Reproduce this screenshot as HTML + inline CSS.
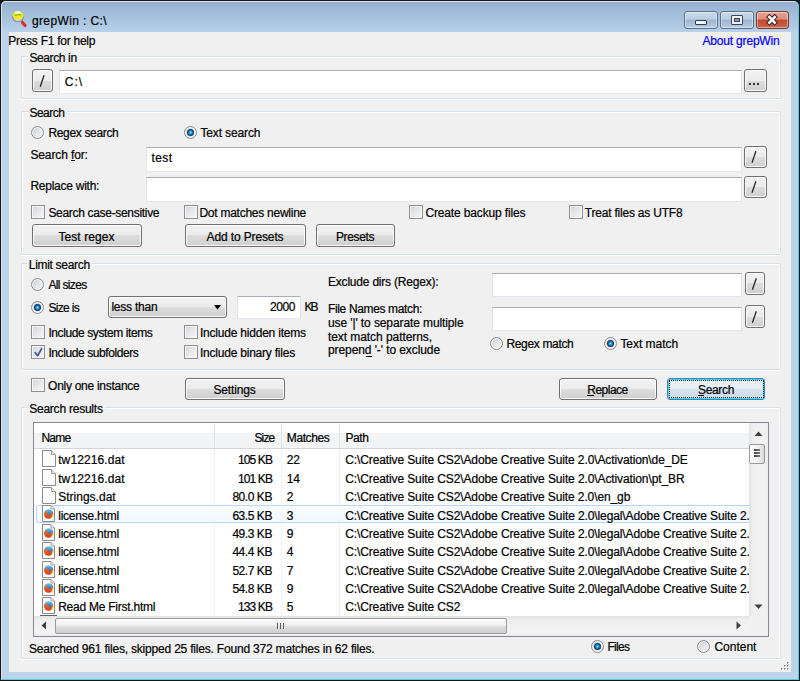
<!DOCTYPE html>
<html><head><meta charset="utf-8"><style>
html,body{margin:0;padding:0;width:800px;height:681px;overflow:hidden;background:#161616;}
#root{position:absolute;left:0;top:0;width:800px;height:681px;overflow:hidden;}
.t{position:absolute;font-family:"Liberation Sans",sans-serif;line-height:12px;white-space:pre;color:#000;-webkit-text-stroke:0.2px currentColor;}

</style></head><body>
<div id="root">
<div style="position:absolute;left:0;top:0;width:800px;height:681px;background:#161616;"></div>
<div style="position:absolute;left:1px;top:1px;width:798px;height:679px;border-radius:5px 5px 0 0;background:#4ccfe6;"></div>
<div style="position:absolute;left:1px;top:1px;width:797px;height:678px;border-radius:5px 5px 0 0;background:#dbe4ed;"></div>
<div style="position:absolute;left:2px;top:2px;width:796px;height:677px;border-radius:4px 4px 0 0;background:#bdd3eb;"></div>
<div style="position:absolute;left:2px;top:2px;width:796px;height:30px;border-radius:4px 4px 0 0;background:linear-gradient(#93b1cf,#b9d1ea);"></div>
<div style="position:absolute;left:9px;top:32px;width:782px;height:640px;background:#f0f0f0;"></div>
<svg style="position:absolute;left:10px;top:9px" width="20" height="20" viewBox="0 0 20 20">
<line x1="12.5" y1="13.5" x2="15" y2="16.5" stroke="#e02a30" stroke-width="3.2" stroke-linecap="round"/>
<ellipse cx="8" cy="8.5" rx="5.5" ry="4.6" fill="#70757c"/>
<ellipse cx="8" cy="8.8" rx="4.6" ry="3.6" fill="#d4d6da"/>
<ellipse cx="8" cy="6.4" rx="5.4" ry="4.0" fill="#f0e818"/>
<ellipse cx="8" cy="3.4" rx="3.2" ry="1.1" fill="#ffffff" opacity="0.85"/>
<path d="M4.6 6.4 Q8 5.2 11.4 6" stroke="#3aa050" stroke-width="1" fill="none" opacity="0.75"/>
</svg>
<div class="t" style="left:31.90px;top:15px;font-size:12px;letter-spacing:0.382px;color:#000;">grepWin : C:\</div>
<div style="position:absolute;left:684px;top:11px;width:34px;height:18px;box-sizing:border-box;border:1px solid #5c6f86;border-radius:3px;background:linear-gradient(#c9daea 0%,#b9cde2 45%,#9cb6d1 50%,#b7cde3 100%);box-shadow:inset 0 0 0 1px rgba(255,255,255,0.45);"></div>
<div style="position:absolute;left:720px;top:11px;width:34px;height:18px;box-sizing:border-box;border:1px solid #5c6f86;border-radius:3px;background:linear-gradient(#c9daea 0%,#b9cde2 45%,#9cb6d1 50%,#b7cde3 100%);box-shadow:inset 0 0 0 1px rgba(255,255,255,0.45);"></div>
<div style="position:absolute;left:756px;top:11px;width:33px;height:18px;box-sizing:border-box;border:1px solid #6e3b33;border-radius:3px;background:linear-gradient(#e8a493 0%,#dc8b78 45%,#c0452d 50%,#d0674b 100%);box-shadow:inset 0 0 0 1px rgba(255,255,255,0.45);"></div>
<div style="position:absolute;left:695px;top:20px;width:12px;height:5px;box-sizing:border-box;background:#f4f6f8;border:1px solid #2e3b4a;border-radius:1px;"></div>
<div style="position:absolute;left:731px;top:15px;width:12px;height:10px;box-sizing:border-box;border:1px solid #3a4656;border-radius:1px;background:#eef0f3;"></div>
<div style="position:absolute;left:734px;top:18px;width:6px;height:4px;box-sizing:border-box;border:1px solid #3a4656;background:#7f9bb8;"></div>
<svg style="position:absolute;left:765px;top:13px" width="14" height="13" viewBox="0 0 14 13">
<path d="M4.3 4 L9.7 9.6 M9.7 4 L4.3 9.6" stroke="#3a2420" stroke-width="4.6" stroke-linecap="square"/>
<path d="M4.3 4 L9.7 9.6 M9.7 4 L4.3 9.6" stroke="#f4f4f4" stroke-width="2.6" stroke-linecap="square"/>
</svg>
<div class="t" style="left:8.20px;top:35px;font-size:12px;letter-spacing:-0.257px;color:#000;">Press F1 for help</div>
<div class="t" style="left:702.50px;top:35px;font-size:12px;letter-spacing:-0.184px;color:#0000ff;">About grepWin</div>
<div style="position:absolute;left:21px;top:56px;width:760px;height:43px;box-sizing:border-box;border:1px solid #d5dfe5;border-radius:2px;box-shadow:inset 1px 1px 0 #fff, inset -1px 0 0 #fff, 0 1px 0 #fff;"></div>
<div style="position:absolute;left:28px;top:52px;width:51.3px;height:12px;background:#f0f0f0;"></div>
<div class="t" style="left:29.40px;top:52px;font-size:12px;letter-spacing:-0.378px;color:#000;">Search in</div>
<div style="position:absolute;left:32px;top:69px;width:21px;height:23px;box-sizing:border-box;border:1px solid #707070;border-radius:3px;background:linear-gradient(#f2f2f2 0%,#ebebeb 50%,#dddddd 50%,#cfcfcf 100%);box-shadow:inset 0 0 0 1px #fbfbfb;"></div>
<svg style="position:absolute;left:0;top:0" width="800" height="681"><line x1="40.2" y1="86.7" x2="44.1" y2="75.3" stroke="#202020" stroke-width="1.25"/></svg>
<div style="position:absolute;left:59px;top:70px;width:683px;height:24px;box-sizing:border-box;background:#fff;border:1px solid #e2e3ea;border-top-color:#abadb3;border-bottom-color:#e3e9ef;"></div>
<div class="t" style="left:64.70px;top:76px;font-size:12px;letter-spacing:1.052px;color:#000;">C:\</div>
<div style="position:absolute;left:744px;top:69px;width:23px;height:23px;box-sizing:border-box;border:1px solid #707070;border-radius:3px;background:linear-gradient(#f2f2f2 0%,#ebebeb 50%,#dddddd 50%,#cfcfcf 100%);box-shadow:inset 0 0 0 1px #fbfbfb;"></div>
<div style="position:absolute;left:749px;top:83px;width:2px;height:2px;background:#303030;"></div>
<div style="position:absolute;left:753px;top:83px;width:2px;height:2px;background:#303030;"></div>
<div style="position:absolute;left:757px;top:83px;width:2px;height:2px;background:#303030;"></div>
<div style="position:absolute;left:21px;top:111px;width:760px;height:144px;box-sizing:border-box;border:1px solid #d5dfe5;border-radius:2px;box-shadow:inset 1px 1px 0 #fff, inset -1px 0 0 #fff, 0 1px 0 #fff;"></div>
<div style="position:absolute;left:28px;top:107px;width:39px;height:12px;background:#f0f0f0;"></div>
<div class="t" style="left:29.40px;top:107px;font-size:12px;letter-spacing:-0.505px;color:#000;">Search</div>
<div style="position:absolute;left:31px;top:126px;width:13px;height:13px;box-sizing:border-box;border-radius:50%;border:1px solid #8b8b8b;background:linear-gradient(135deg,#c6ccd4 0%,#e2e5e9 50%,#f6f6f6 100%);box-shadow:inset 0 0 0 1px #f8f8f8;"></div>
<div class="t" style="left:48.40px;top:127px;font-size:12px;letter-spacing:-0.337px;color:#000;">Regex search</div>
<div style="position:absolute;left:184px;top:126px;width:13px;height:13px;box-sizing:border-box;border-radius:50%;border:1px solid #8b8b8b;background:linear-gradient(135deg,#c6ccd4 0%,#e2e5e9 50%,#f6f6f6 100%);box-shadow:inset 0 0 0 1px #f8f8f8;"></div>
<div style="position:absolute;left:187px;top:129px;width:7px;height:7px;border-radius:50%;background:radial-gradient(circle closest-side at 50% 50%,#8ae4ff 0%,#35b0e8 30%,#1570b0 60%,#0b355f 85%,#1a3350 100%);"></div>
<div class="t" style="left:200.40px;top:127px;font-size:12px;letter-spacing:-0.124px;color:#000;">Text search</div>
<div class="t" style="left:30.40px;top:149px;font-size:12px;letter-spacing:-0.118px;color:#000;">Search for:</div>
<div class="t" style="left:30.40px;top:180px;font-size:12px;letter-spacing:-0.250px;color:#000;">Replace with:</div>
<div style="position:absolute;left:146px;top:147px;width:596px;height:25px;box-sizing:border-box;background:#fff;border:1px solid #e2e3ea;border-top-color:#abadb3;border-bottom-color:#e3e9ef;"></div>
<div class="t" style="left:151.40px;top:152px;font-size:12px;letter-spacing:0.414px;color:#000;">test</div>
<div style="position:absolute;left:744px;top:146px;width:23px;height:22px;box-sizing:border-box;border:1px solid #707070;border-radius:3px;background:linear-gradient(#f2f2f2 0%,#ebebeb 50%,#dddddd 50%,#cfcfcf 100%);box-shadow:inset 0 0 0 1px #fbfbfb;"></div>
<svg style="position:absolute;left:0;top:0" width="800" height="681"><line x1="752.0" y1="162.7" x2="755.9" y2="151.3" stroke="#202020" stroke-width="1.25"/></svg>
<div style="position:absolute;left:146px;top:177px;width:596px;height:25px;box-sizing:border-box;background:#fff;border:1px solid #e2e3ea;border-top-color:#abadb3;border-bottom-color:#e3e9ef;"></div>
<div style="position:absolute;left:744px;top:176px;width:23px;height:22px;box-sizing:border-box;border:1px solid #707070;border-radius:3px;background:linear-gradient(#f2f2f2 0%,#ebebeb 50%,#dddddd 50%,#cfcfcf 100%);box-shadow:inset 0 0 0 1px #fbfbfb;"></div>
<svg style="position:absolute;left:0;top:0" width="800" height="681"><line x1="752.0" y1="192.7" x2="755.9" y2="181.3" stroke="#202020" stroke-width="1.25"/></svg>
<div style="position:absolute;left:31px;top:205px;width:14px;height:14px;box-sizing:border-box;border:1px solid #8f8f8f;background:linear-gradient(135deg,#cfd3d8 0%,#e6e8eb 50%,#f7f7f7 100%);box-shadow:inset 0 0 0 1px #f6f6f6;"></div>
<div class="t" style="left:48.40px;top:207px;font-size:12px;letter-spacing:-0.314px;color:#000;">Search case-sensitive</div>
<div style="position:absolute;left:184px;top:205px;width:14px;height:14px;box-sizing:border-box;border:1px solid #8f8f8f;background:linear-gradient(135deg,#cfd3d8 0%,#e6e8eb 50%,#f7f7f7 100%);box-shadow:inset 0 0 0 1px #f6f6f6;"></div>
<div class="t" style="left:199.40px;top:207px;font-size:12px;letter-spacing:-0.252px;color:#000;">Dot matches newline</div>
<div style="position:absolute;left:409px;top:205px;width:14px;height:14px;box-sizing:border-box;border:1px solid #8f8f8f;background:linear-gradient(135deg,#cfd3d8 0%,#e6e8eb 50%,#f7f7f7 100%);box-shadow:inset 0 0 0 1px #f6f6f6;"></div>
<div class="t" style="left:425.40px;top:207px;font-size:12px;letter-spacing:-0.144px;color:#000;">Create backup files</div>
<div style="position:absolute;left:569px;top:205px;width:14px;height:14px;box-sizing:border-box;border:1px solid #8f8f8f;background:linear-gradient(135deg,#cfd3d8 0%,#e6e8eb 50%,#f7f7f7 100%);box-shadow:inset 0 0 0 1px #f6f6f6;"></div>
<div class="t" style="left:584.80px;top:207px;font-size:12px;letter-spacing:-0.209px;color:#000;">Treat files as UTF8</div>
<div style="position:absolute;left:32px;top:224px;width:110px;height:23px;box-sizing:border-box;border:1px solid #707070;border-radius:3px;background:linear-gradient(#f2f2f2 0%,#ebebeb 50%,#dddddd 50%,#cfcfcf 100%);box-shadow:inset 0 0 0 1px #fbfbfb;"></div>
<div class="t" style="left:58.50px;top:231px;font-size:12px;letter-spacing:0.064px;color:#000;">Test regex</div>
<div style="position:absolute;left:185px;top:224px;width:121px;height:23px;box-sizing:border-box;border:1px solid #707070;border-radius:3px;background:linear-gradient(#f2f2f2 0%,#ebebeb 50%,#dddddd 50%,#cfcfcf 100%);box-shadow:inset 0 0 0 1px #fbfbfb;"></div>
<div class="t" style="left:206.50px;top:231px;font-size:12px;letter-spacing:-0.123px;color:#000;">Add to Presets</div>
<div style="position:absolute;left:316px;top:224px;width:79px;height:23px;box-sizing:border-box;border:1px solid #707070;border-radius:3px;background:linear-gradient(#f2f2f2 0%,#ebebeb 50%,#dddddd 50%,#cfcfcf 100%);box-shadow:inset 0 0 0 1px #fbfbfb;"></div>
<div class="t" style="left:336.00px;top:231px;font-size:12px;letter-spacing:-0.384px;color:#000;">Presets</div>
<div style="position:absolute;left:21px;top:263px;width:760px;height:107px;box-sizing:border-box;border:1px solid #d5dfe5;border-radius:2px;box-shadow:inset 1px 1px 0 #fff, inset -1px 0 0 #fff, 0 1px 0 #fff;"></div>
<div style="position:absolute;left:27.4px;top:259px;width:65px;height:12px;background:#f0f0f0;"></div>
<div class="t" style="left:28.80px;top:259px;font-size:12px;letter-spacing:-0.307px;color:#000;">Limit search</div>
<div style="position:absolute;left:31px;top:278px;width:13px;height:13px;box-sizing:border-box;border-radius:50%;border:1px solid #8b8b8b;background:linear-gradient(135deg,#c6ccd4 0%,#e2e5e9 50%,#f6f6f6 100%);box-shadow:inset 0 0 0 1px #f8f8f8;"></div>
<div class="t" style="left:48.40px;top:279px;font-size:12px;letter-spacing:-0.646px;color:#000;">All sizes</div>
<div style="position:absolute;left:31px;top:301px;width:13px;height:13px;box-sizing:border-box;border-radius:50%;border:1px solid #8b8b8b;background:linear-gradient(135deg,#c6ccd4 0%,#e2e5e9 50%,#f6f6f6 100%);box-shadow:inset 0 0 0 1px #f8f8f8;"></div>
<div style="position:absolute;left:34px;top:304px;width:7px;height:7px;border-radius:50%;background:radial-gradient(circle closest-side at 50% 50%,#8ae4ff 0%,#35b0e8 30%,#1570b0 60%,#0b355f 85%,#1a3350 100%);"></div>
<div class="t" style="left:48.40px;top:302px;font-size:12px;letter-spacing:-0.678px;color:#000;">Size is</div>
<div style="position:absolute;left:108px;top:296px;width:119px;height:22px;box-sizing:border-box;border:1px solid #707070;border-radius:3px;background:linear-gradient(#f2f2f2 0%,#ebebeb 50%,#dddddd 50%,#cfcfcf 100%);box-shadow:inset 0 0 0 1px #fbfbfb;"></div>
<div class="t" style="left:111.40px;top:301px;font-size:12px;letter-spacing:-0.226px;color:#000;">less than</div>
<svg style="position:absolute;left:214px;top:305px" width="8" height="6" viewBox="0 0 8 6"><path d="M0 0 H7 L3.5 4.6 Z" fill="#000"/></svg>
<div style="position:absolute;left:237px;top:296px;width:64px;height:23px;box-sizing:border-box;background:#fff;border:1px solid #e2e3ea;border-top-color:#abadb3;border-bottom-color:#e3e9ef;"></div>
<div class="t" style="left:270.00px;top:301px;font-size:12px;letter-spacing:-0.426px;color:#000;">2000</div>
<div class="t" style="left:304.40px;top:301px;font-size:12px;letter-spacing:-1.858px;color:#000;">KB</div>
<div style="position:absolute;left:31px;top:325px;width:14px;height:14px;box-sizing:border-box;border:1px solid #8f8f8f;background:linear-gradient(135deg,#cfd3d8 0%,#e6e8eb 50%,#f7f7f7 100%);box-shadow:inset 0 0 0 1px #f6f6f6;"></div>
<div class="t" style="left:48.40px;top:327px;font-size:12px;letter-spacing:-0.402px;color:#000;">Include system items</div>
<div style="position:absolute;left:184px;top:325px;width:14px;height:14px;box-sizing:border-box;border:1px solid #8f8f8f;background:linear-gradient(135deg,#cfd3d8 0%,#e6e8eb 50%,#f7f7f7 100%);box-shadow:inset 0 0 0 1px #f6f6f6;"></div>
<div class="t" style="left:200.00px;top:327px;font-size:12px;letter-spacing:-0.214px;color:#000;">Include hidden items</div>
<div style="position:absolute;left:31px;top:345px;width:14px;height:14px;box-sizing:border-box;border:1px solid #8f8f8f;background:linear-gradient(135deg,#cfd3d8 0%,#e6e8eb 50%,#f7f7f7 100%);box-shadow:inset 0 0 0 1px #f6f6f6;"></div>
<svg style="position:absolute;left:31px;top:345px" width="14" height="14" viewBox="0 0 14 14"><path d="M4.2 7.6 L6.6 10.8 L10.6 3.8" fill="none" stroke="#4a5f9c" stroke-width="1.8" stroke-linejoin="round" stroke-linecap="round"/></svg>
<div class="t" style="left:48.40px;top:347px;font-size:12px;letter-spacing:-0.411px;color:#000;">Include subfolders</div>
<div style="position:absolute;left:184px;top:345px;width:14px;height:14px;box-sizing:border-box;border:1px solid #8f8f8f;background:linear-gradient(135deg,#cfd3d8 0%,#e6e8eb 50%,#f7f7f7 100%);box-shadow:inset 0 0 0 1px #f6f6f6;"></div>
<div class="t" style="left:200.00px;top:347px;font-size:12px;letter-spacing:-0.220px;color:#000;">Include binary files</div>
<div class="t" style="left:328.00px;top:276px;font-size:12px;letter-spacing:-0.206px;color:#000;">Exclude dirs (Regex):</div>
<div class="t" style="left:328.00px;top:303px;font-size:12px;letter-spacing:-0.355px;color:#000;">File Names match:</div>
<div class="t" style="left:328.00px;top:316.5px;font-size:12px;letter-spacing:-0.105px;color:#000;">use &#x27;|&#x27; to separate multiple</div>
<div class="t" style="left:328.00px;top:331px;font-size:12px;letter-spacing:-0.070px;color:#000;">text match patterns,</div>
<div class="t" style="left:328.00px;top:344px;font-size:12px;letter-spacing:-0.091px;color:#000;">prepend &#x27;-&#x27; to exclude</div>
<div style="position:absolute;left:492px;top:273px;width:250px;height:24px;box-sizing:border-box;background:#fff;border:1px solid #e2e3ea;border-top-color:#abadb3;border-bottom-color:#e3e9ef;"></div>
<div style="position:absolute;left:745px;top:272px;width:20px;height:23px;box-sizing:border-box;border:1px solid #707070;border-radius:3px;background:linear-gradient(#f2f2f2 0%,#ebebeb 50%,#dddddd 50%,#cfcfcf 100%);box-shadow:inset 0 0 0 1px #fbfbfb;"></div>
<svg style="position:absolute;left:0;top:0" width="800" height="681"><line x1="752.4" y1="289.7" x2="756.3" y2="278.3" stroke="#202020" stroke-width="1.25"/></svg>
<div style="position:absolute;left:492px;top:307px;width:250px;height:24px;box-sizing:border-box;background:#fff;border:1px solid #e2e3ea;border-top-color:#abadb3;border-bottom-color:#e3e9ef;"></div>
<div style="position:absolute;left:745px;top:305px;width:20px;height:23px;box-sizing:border-box;border:1px solid #707070;border-radius:3px;background:linear-gradient(#f2f2f2 0%,#ebebeb 50%,#dddddd 50%,#cfcfcf 100%);box-shadow:inset 0 0 0 1px #fbfbfb;"></div>
<svg style="position:absolute;left:0;top:0" width="800" height="681"><line x1="752.4" y1="322.7" x2="756.3" y2="311.3" stroke="#202020" stroke-width="1.25"/></svg>
<div style="position:absolute;left:490px;top:337px;width:13px;height:13px;box-sizing:border-box;border-radius:50%;border:1px solid #8b8b8b;background:linear-gradient(135deg,#c6ccd4 0%,#e2e5e9 50%,#f6f6f6 100%);box-shadow:inset 0 0 0 1px #f8f8f8;"></div>
<div class="t" style="left:506.40px;top:338px;font-size:12px;letter-spacing:-0.337px;color:#000;">Regex match</div>
<div style="position:absolute;left:604px;top:337px;width:13px;height:13px;box-sizing:border-box;border-radius:50%;border:1px solid #8b8b8b;background:linear-gradient(135deg,#c6ccd4 0%,#e2e5e9 50%,#f6f6f6 100%);box-shadow:inset 0 0 0 1px #f8f8f8;"></div>
<div style="position:absolute;left:607px;top:340px;width:7px;height:7px;border-radius:50%;background:radial-gradient(circle closest-side at 50% 50%,#8ae4ff 0%,#35b0e8 30%,#1570b0 60%,#0b355f 85%,#1a3350 100%);"></div>
<div class="t" style="left:620.40px;top:338px;font-size:12px;letter-spacing:-0.028px;color:#000;">Text match</div>
<div style="position:absolute;left:31px;top:378px;width:14px;height:14px;box-sizing:border-box;border:1px solid #8f8f8f;background:linear-gradient(135deg,#cfd3d8 0%,#e6e8eb 50%,#f7f7f7 100%);box-shadow:inset 0 0 0 1px #f6f6f6;"></div>
<div class="t" style="left:48.10px;top:380px;font-size:12px;letter-spacing:-0.280px;color:#000;">Only one instance</div>
<div style="position:absolute;left:185px;top:378px;width:100px;height:22px;box-sizing:border-box;border:1px solid #707070;border-radius:3px;background:linear-gradient(#f2f2f2 0%,#ebebeb 50%,#dddddd 50%,#cfcfcf 100%);box-shadow:inset 0 0 0 1px #fbfbfb;"></div>
<div class="t" style="left:213.50px;top:384px;font-size:12px;letter-spacing:-0.170px;color:#000;">Settings</div>
<div style="position:absolute;left:559px;top:378px;width:98px;height:22px;box-sizing:border-box;border:1px solid #707070;border-radius:3px;background:linear-gradient(#f2f2f2 0%,#ebebeb 50%,#dddddd 50%,#cfcfcf 100%);box-shadow:inset 0 0 0 1px #fbfbfb;"></div>
<div class="t" style="left:587.30px;top:384px;font-size:12px;letter-spacing:-0.519px;color:#000;">Replace</div>
<div style="position:absolute;left:667px;top:378px;width:98px;height:22px;box-sizing:border-box;border:1px solid #3c7fb1;border-radius:3px;background:linear-gradient(#eef4f8 0%,#e6eef4 50%,#d6e2eb 50%,#cddbe6 100%);box-shadow:inset 0 0 0 1px #48d8fb, inset 0 0 0 2px #bfe9f9;"></div>
<div style="position:absolute;left:669px;top:380px;width:95px;height:18px;box-sizing:border-box;border:1px dotted #202020;"></div>
<div class="t" style="left:698.00px;top:384px;font-size:12px;letter-spacing:-0.339px;color:#000;">Search</div>
<div style="position:absolute;left:21px;top:407px;width:760px;height:252px;box-sizing:border-box;border:1px solid #d5dfe5;border-radius:2px;box-shadow:inset 1px 1px 0 #fff, inset -1px 0 0 #fff, 0 1px 0 #fff;"></div>
<div style="position:absolute;left:27.8px;top:403px;width:77.5px;height:12px;background:#f0f0f0;"></div>
<div class="t" style="left:29.20px;top:403px;font-size:12px;letter-spacing:-0.229px;color:#000;">Search results</div>
<div style="position:absolute;left:33px;top:422px;width:736px;height:215px;box-sizing:border-box;border:1px solid #828790;background:#fff;"></div>
<div style="position:absolute;left:34px;top:423px;width:715px;height:26px;box-sizing:border-box;background:linear-gradient(#ffffff 0%,#ffffff 42%,#f3f4f6 42%,#f3f4f6 100%);border-bottom:1px solid #d5d5d5;"></div>
<div style="position:absolute;left:214px;top:424px;width:1px;height:24px;background:#dfe1e4;"></div>
<div style="position:absolute;left:214px;top:449px;width:1px;height:167px;background:#eef3fb;"></div>
<div style="position:absolute;left:281px;top:424px;width:1px;height:24px;background:#dfe1e4;"></div>
<div style="position:absolute;left:281px;top:449px;width:1px;height:167px;background:#eef3fb;"></div>
<div style="position:absolute;left:339px;top:424px;width:1px;height:24px;background:#dfe1e4;"></div>
<div style="position:absolute;left:339px;top:449px;width:1px;height:167px;background:#eef3fb;"></div>
<div class="t" style="left:41.40px;top:432px;font-size:12px;letter-spacing:-0.754px;color:#000;">Name</div>
<div class="t" style="left:254.40px;top:432px;font-size:12px;letter-spacing:-0.836px;color:#000;">Size</div>
<div class="t" style="left:286.80px;top:432px;font-size:12px;letter-spacing:-0.394px;color:#000;">Matches</div>
<div class="t" style="left:345.40px;top:432px;font-size:12px;letter-spacing:-0.422px;color:#000;">Path</div>
<div style="position:absolute;left:36px;top:505.0px;width:728px;height:18px;box-sizing:border-box;border:1px solid #b8d6fb;border-radius:2px;background:linear-gradient(#fafcff,#f2f8ff);"></div>
<div style="position:absolute;left:34px;top:448px;width:715px;height:168px;overflow:hidden">
</div>
<svg style="position:absolute;left:41px;top:450px" width="16" height="17" viewBox="0 0 16 17">
<path d="M1.5 0.5 H10.5 L14.5 4.5 V16.5 H1.5 Z" fill="#fbfbfb" stroke="#8a8a8a"/>
<path d="M10.5 0.5 V4.5 H14.5" fill="#e8e8e8" stroke="#a0a0a0"/></svg>
<div class="t" style="left:58.20px;top:454px;font-size:12px;letter-spacing:0.101px;color:#000;">tw12216.dat</div>
<div class="t" style="left:238.00px;top:454px;font-size:12px;letter-spacing:-0.896px;color:#000;">105 KB</div>
<div class="t" style="left:286.80px;top:454px;font-size:12px;letter-spacing:-0.334px;color:#000;">22</div>
<div class="t" style="left:345.20px;top:454px;font-size:12px;letter-spacing:-0.111px;color:#000;">C:\Creative Suite CS2\Adobe Creative Suite 2.0\Activation\de_DE</div>
<svg style="position:absolute;left:41px;top:469px" width="16" height="17" viewBox="0 0 16 17">
<path d="M1.5 0.5 H10.5 L14.5 4.5 V16.5 H1.5 Z" fill="#fbfbfb" stroke="#8a8a8a"/>
<path d="M10.5 0.5 V4.5 H14.5" fill="#e8e8e8" stroke="#a0a0a0"/></svg>
<div class="t" style="left:58.20px;top:473px;font-size:12px;letter-spacing:0.101px;color:#000;">tw12216.dat</div>
<div class="t" style="left:238.00px;top:473px;font-size:12px;letter-spacing:-0.896px;color:#000;">101 KB</div>
<div class="t" style="left:286.80px;top:473px;font-size:12px;letter-spacing:-0.334px;color:#000;">14</div>
<div class="t" style="left:345.20px;top:473px;font-size:12px;letter-spacing:-0.110px;color:#000;">C:\Creative Suite CS2\Adobe Creative Suite 2.0\Activation\pt_BR</div>
<svg style="position:absolute;left:41px;top:487px" width="16" height="17" viewBox="0 0 16 17">
<path d="M1.5 0.5 H10.5 L14.5 4.5 V16.5 H1.5 Z" fill="#fbfbfb" stroke="#8a8a8a"/>
<path d="M10.5 0.5 V4.5 H14.5" fill="#e8e8e8" stroke="#a0a0a0"/></svg>
<div class="t" style="left:58.20px;top:491px;font-size:12px;letter-spacing:0.011px;color:#000;">Strings.dat</div>
<div class="t" style="left:232.40px;top:491px;font-size:12px;letter-spacing:-0.443px;color:#000;">80.0 KB</div>
<div class="t" style="left:286.80px;top:491px;font-size:12px;letter-spacing:-0.334px;color:#000;">2</div>
<div class="t" style="left:345.20px;top:491px;font-size:12px;letter-spacing:-0.112px;color:#000;">C:\Creative Suite CS2\Adobe Creative Suite 2.0\en_gb</div>
<svg style="position:absolute;left:41px;top:505px" width="16" height="17" viewBox="0 0 16 17">
<defs><linearGradient id="og3" x1="0" y1="0" x2="0" y2="1"><stop offset="0" stop-color="#f7861e"/><stop offset="1" stop-color="#d63b1e"/></linearGradient>
<linearGradient id="bg3" x1="0" y1="0" x2="0" y2="1"><stop offset="0" stop-color="#62c8f2"/><stop offset="1" stop-color="#1d62b8"/></linearGradient></defs>
<path d="M1.5 0.5 H10 L13.5 4 V16.5 H1.5 Z" fill="#fbfbfb" stroke="#8a8a8a"/>
<path d="M10 0.5 V4 H13.5" fill="#e8e8e8" stroke="#a8a8a8"/>
<circle cx="7.6" cy="9.1" r="4.7" fill="url(#og3)"/>
<path d="M3.8 6.6 Q5.4 4.3 8 4.4 Q11.2 4.7 12.2 7.8 Q11.2 7.2 10.4 8 L9.3 10.8 Q8.4 9.6 7.1 9 Q5.6 7.4 3.8 6.6 Z" fill="url(#bg3)"/>
<path d="M11.9 8.4 Q12.7 10.8 11.2 12.6 Q10.3 13.4 9.1 13.7 Q10.9 11.8 11.9 8.4 Z" fill="#f6cc3c"/>
</svg>
<div class="t" style="left:58.20px;top:510px;font-size:12px;letter-spacing:-0.222px;color:#000;">license.html</div>
<div class="t" style="left:232.40px;top:510px;font-size:12px;letter-spacing:-0.443px;color:#000;">63.5 KB</div>
<div class="t" style="left:286.80px;top:510px;font-size:12px;letter-spacing:-0.334px;color:#000;">3</div>
<div class="t" style="left:345.20px;top:510px;font-size:12px;letter-spacing:-0.109px;color:#000;">C:\Creative Suite CS2\Adobe Creative Suite 2.0\legal\Adobe Creative Suite 2.0</div>
<svg style="position:absolute;left:41px;top:524px" width="16" height="17" viewBox="0 0 16 17">
<defs><linearGradient id="og4" x1="0" y1="0" x2="0" y2="1"><stop offset="0" stop-color="#f7861e"/><stop offset="1" stop-color="#d63b1e"/></linearGradient>
<linearGradient id="bg4" x1="0" y1="0" x2="0" y2="1"><stop offset="0" stop-color="#62c8f2"/><stop offset="1" stop-color="#1d62b8"/></linearGradient></defs>
<path d="M1.5 0.5 H10 L13.5 4 V16.5 H1.5 Z" fill="#fbfbfb" stroke="#8a8a8a"/>
<path d="M10 0.5 V4 H13.5" fill="#e8e8e8" stroke="#a8a8a8"/>
<circle cx="7.6" cy="9.1" r="4.7" fill="url(#og4)"/>
<path d="M3.8 6.6 Q5.4 4.3 8 4.4 Q11.2 4.7 12.2 7.8 Q11.2 7.2 10.4 8 L9.3 10.8 Q8.4 9.6 7.1 9 Q5.6 7.4 3.8 6.6 Z" fill="url(#bg4)"/>
<path d="M11.9 8.4 Q12.7 10.8 11.2 12.6 Q10.3 13.4 9.1 13.7 Q10.9 11.8 11.9 8.4 Z" fill="#f6cc3c"/>
</svg>
<div class="t" style="left:58.20px;top:528px;font-size:12px;letter-spacing:-0.222px;color:#000;">license.html</div>
<div class="t" style="left:232.40px;top:528px;font-size:12px;letter-spacing:-0.443px;color:#000;">49.3 KB</div>
<div class="t" style="left:286.80px;top:528px;font-size:12px;letter-spacing:-0.334px;color:#000;">9</div>
<div class="t" style="left:345.20px;top:528px;font-size:12px;letter-spacing:-0.109px;color:#000;">C:\Creative Suite CS2\Adobe Creative Suite 2.0\legal\Adobe Creative Suite 2.0</div>
<svg style="position:absolute;left:41px;top:542px" width="16" height="17" viewBox="0 0 16 17">
<defs><linearGradient id="og5" x1="0" y1="0" x2="0" y2="1"><stop offset="0" stop-color="#f7861e"/><stop offset="1" stop-color="#d63b1e"/></linearGradient>
<linearGradient id="bg5" x1="0" y1="0" x2="0" y2="1"><stop offset="0" stop-color="#62c8f2"/><stop offset="1" stop-color="#1d62b8"/></linearGradient></defs>
<path d="M1.5 0.5 H10 L13.5 4 V16.5 H1.5 Z" fill="#fbfbfb" stroke="#8a8a8a"/>
<path d="M10 0.5 V4 H13.5" fill="#e8e8e8" stroke="#a8a8a8"/>
<circle cx="7.6" cy="9.1" r="4.7" fill="url(#og5)"/>
<path d="M3.8 6.6 Q5.4 4.3 8 4.4 Q11.2 4.7 12.2 7.8 Q11.2 7.2 10.4 8 L9.3 10.8 Q8.4 9.6 7.1 9 Q5.6 7.4 3.8 6.6 Z" fill="url(#bg5)"/>
<path d="M11.9 8.4 Q12.7 10.8 11.2 12.6 Q10.3 13.4 9.1 13.7 Q10.9 11.8 11.9 8.4 Z" fill="#f6cc3c"/>
</svg>
<div class="t" style="left:58.20px;top:546px;font-size:12px;letter-spacing:-0.222px;color:#000;">license.html</div>
<div class="t" style="left:232.40px;top:546px;font-size:12px;letter-spacing:-0.443px;color:#000;">44.4 KB</div>
<div class="t" style="left:286.80px;top:546px;font-size:12px;letter-spacing:-0.334px;color:#000;">4</div>
<div class="t" style="left:345.20px;top:546px;font-size:12px;letter-spacing:-0.109px;color:#000;">C:\Creative Suite CS2\Adobe Creative Suite 2.0\legal\Adobe Creative Suite 2.0</div>
<svg style="position:absolute;left:41px;top:561px" width="16" height="17" viewBox="0 0 16 17">
<defs><linearGradient id="og6" x1="0" y1="0" x2="0" y2="1"><stop offset="0" stop-color="#f7861e"/><stop offset="1" stop-color="#d63b1e"/></linearGradient>
<linearGradient id="bg6" x1="0" y1="0" x2="0" y2="1"><stop offset="0" stop-color="#62c8f2"/><stop offset="1" stop-color="#1d62b8"/></linearGradient></defs>
<path d="M1.5 0.5 H10 L13.5 4 V16.5 H1.5 Z" fill="#fbfbfb" stroke="#8a8a8a"/>
<path d="M10 0.5 V4 H13.5" fill="#e8e8e8" stroke="#a8a8a8"/>
<circle cx="7.6" cy="9.1" r="4.7" fill="url(#og6)"/>
<path d="M3.8 6.6 Q5.4 4.3 8 4.4 Q11.2 4.7 12.2 7.8 Q11.2 7.2 10.4 8 L9.3 10.8 Q8.4 9.6 7.1 9 Q5.6 7.4 3.8 6.6 Z" fill="url(#bg6)"/>
<path d="M11.9 8.4 Q12.7 10.8 11.2 12.6 Q10.3 13.4 9.1 13.7 Q10.9 11.8 11.9 8.4 Z" fill="#f6cc3c"/>
</svg>
<div class="t" style="left:58.20px;top:565px;font-size:12px;letter-spacing:-0.222px;color:#000;">license.html</div>
<div class="t" style="left:232.40px;top:565px;font-size:12px;letter-spacing:-0.443px;color:#000;">52.7 KB</div>
<div class="t" style="left:286.80px;top:565px;font-size:12px;letter-spacing:-0.334px;color:#000;">7</div>
<div class="t" style="left:345.20px;top:565px;font-size:12px;letter-spacing:-0.109px;color:#000;">C:\Creative Suite CS2\Adobe Creative Suite 2.0\legal\Adobe Creative Suite 2.0</div>
<svg style="position:absolute;left:41px;top:579px" width="16" height="17" viewBox="0 0 16 17">
<defs><linearGradient id="og7" x1="0" y1="0" x2="0" y2="1"><stop offset="0" stop-color="#f7861e"/><stop offset="1" stop-color="#d63b1e"/></linearGradient>
<linearGradient id="bg7" x1="0" y1="0" x2="0" y2="1"><stop offset="0" stop-color="#62c8f2"/><stop offset="1" stop-color="#1d62b8"/></linearGradient></defs>
<path d="M1.5 0.5 H10 L13.5 4 V16.5 H1.5 Z" fill="#fbfbfb" stroke="#8a8a8a"/>
<path d="M10 0.5 V4 H13.5" fill="#e8e8e8" stroke="#a8a8a8"/>
<circle cx="7.6" cy="9.1" r="4.7" fill="url(#og7)"/>
<path d="M3.8 6.6 Q5.4 4.3 8 4.4 Q11.2 4.7 12.2 7.8 Q11.2 7.2 10.4 8 L9.3 10.8 Q8.4 9.6 7.1 9 Q5.6 7.4 3.8 6.6 Z" fill="url(#bg7)"/>
<path d="M11.9 8.4 Q12.7 10.8 11.2 12.6 Q10.3 13.4 9.1 13.7 Q10.9 11.8 11.9 8.4 Z" fill="#f6cc3c"/>
</svg>
<div class="t" style="left:58.20px;top:583px;font-size:12px;letter-spacing:-0.222px;color:#000;">license.html</div>
<div class="t" style="left:232.40px;top:583px;font-size:12px;letter-spacing:-0.443px;color:#000;">54.8 KB</div>
<div class="t" style="left:286.80px;top:583px;font-size:12px;letter-spacing:-0.334px;color:#000;">9</div>
<div class="t" style="left:345.20px;top:583px;font-size:12px;letter-spacing:-0.109px;color:#000;">C:\Creative Suite CS2\Adobe Creative Suite 2.0\legal\Adobe Creative Suite 2.0</div>
<svg style="position:absolute;left:41px;top:597px" width="16" height="17" viewBox="0 0 16 17">
<defs><linearGradient id="og8" x1="0" y1="0" x2="0" y2="1"><stop offset="0" stop-color="#f7861e"/><stop offset="1" stop-color="#d63b1e"/></linearGradient>
<linearGradient id="bg8" x1="0" y1="0" x2="0" y2="1"><stop offset="0" stop-color="#62c8f2"/><stop offset="1" stop-color="#1d62b8"/></linearGradient></defs>
<path d="M1.5 0.5 H10 L13.5 4 V16.5 H1.5 Z" fill="#fbfbfb" stroke="#8a8a8a"/>
<path d="M10 0.5 V4 H13.5" fill="#e8e8e8" stroke="#a8a8a8"/>
<circle cx="7.6" cy="9.1" r="4.7" fill="url(#og8)"/>
<path d="M3.8 6.6 Q5.4 4.3 8 4.4 Q11.2 4.7 12.2 7.8 Q11.2 7.2 10.4 8 L9.3 10.8 Q8.4 9.6 7.1 9 Q5.6 7.4 3.8 6.6 Z" fill="url(#bg8)"/>
<path d="M11.9 8.4 Q12.7 10.8 11.2 12.6 Q10.3 13.4 9.1 13.7 Q10.9 11.8 11.9 8.4 Z" fill="#f6cc3c"/>
</svg>
<div class="t" style="left:58.20px;top:601px;font-size:12px;letter-spacing:-0.242px;color:#000;">Read Me First.html</div>
<div class="t" style="left:238.00px;top:601px;font-size:12px;letter-spacing:-0.896px;color:#000;">133 KB</div>
<div class="t" style="left:286.80px;top:601px;font-size:12px;letter-spacing:-0.334px;color:#000;">5</div>
<div class="t" style="left:345.20px;top:601px;font-size:12px;letter-spacing:-0.112px;color:#000;">C:\Creative Suite CS2</div>
<div style="position:absolute;left:749px;top:423px;width:19px;height:213px;background:#f0f0f0;"></div>
<div style="position:absolute;left:749px;top:423px;width:19px;height:193px;background:linear-gradient(90deg,#e3e3e3 0%,#efefef 20%,#f2f2f2 80%,#ececec 100%);"></div>
<svg style="position:absolute;left:754px;top:431px" width="9" height="6" viewBox="0 0 9 6"><path d="M0.5 5 L4.5 0.5 L8.5 5 Z" fill="#404040"/></svg>
<svg style="position:absolute;left:754px;top:604px" width="9" height="6" viewBox="0 0 9 6"><path d="M0.5 0.5 L4.5 5 L8.5 0.5 Z" fill="#404040"/></svg>
<div style="position:absolute;left:749px;top:444px;width:16px;height:20px;box-sizing:border-box;border:1px solid #9a9a9a;border-radius:2px;background:linear-gradient(90deg,#fdfdfd 0%,#f0f0f0 60%,#d8d8d8 100%);"></div>
<div style="position:absolute;left:754px;top:449px;width:6px;height:2px;background:linear-gradient(90deg,#404040,#7a7a7a);"></div>
<div style="position:absolute;left:754px;top:452px;width:6px;height:2px;background:linear-gradient(90deg,#404040,#7a7a7a);"></div>
<div style="position:absolute;left:754px;top:455px;width:6px;height:2px;background:linear-gradient(90deg,#404040,#7a7a7a);"></div>
<div style="position:absolute;left:34px;top:616px;width:715px;height:20px;background:linear-gradient(#e3e3e3 0%,#efefef 20%,#f2f2f2 80%,#ececec 100%);"></div>
<div style="position:absolute;left:749px;top:616px;width:19px;height:20px;background:#f0f0f0;"></div>
<svg style="position:absolute;left:41px;top:621px" width="6" height="9" viewBox="0 0 6 9"><path d="M5 0.5 L0.5 4.5 L5 8.5 Z" fill="#404040"/></svg>
<svg style="position:absolute;left:736px;top:621px" width="6" height="9" viewBox="0 0 6 9"><path d="M0.5 0.5 L5 4.5 L0.5 8.5 Z" fill="#404040"/></svg>
<div style="position:absolute;left:55px;top:618px;width:452px;height:16px;box-sizing:border-box;border:1px solid #9a9a9a;border-radius:2px;background:linear-gradient(#fdfdfd 0%,#f0f0f0 45%,#dcdcdc 55%,#cfcfcf 100%);"></div>
<div style="position:absolute;left:277px;top:623px;width:1px;height:6px;background:#5a5a5a;box-shadow:1px 0 0 #e8e8e8;"></div>
<div style="position:absolute;left:280px;top:623px;width:1px;height:6px;background:#5a5a5a;box-shadow:1px 0 0 #e8e8e8;"></div>
<div style="position:absolute;left:283px;top:623px;width:1px;height:6px;background:#5a5a5a;box-shadow:1px 0 0 #e8e8e8;"></div>
<div style="position:absolute;left:40px;top:615px;width:17px;height:1px;background:#606060;"></div>
<div class="t" style="left:28.90px;top:643px;font-size:12px;letter-spacing:-0.197px;color:#000;">Searched 961 files, skipped 25 files. Found 372 matches in 62 files.</div>
<div style="position:absolute;left:591px;top:640px;width:13px;height:13px;box-sizing:border-box;border-radius:50%;border:1px solid #8b8b8b;background:linear-gradient(135deg,#c6ccd4 0%,#e2e5e9 50%,#f6f6f6 100%);box-shadow:inset 0 0 0 1px #f8f8f8;"></div>
<div style="position:absolute;left:594px;top:643px;width:7px;height:7px;border-radius:50%;background:radial-gradient(circle closest-side at 50% 50%,#8ae4ff 0%,#35b0e8 30%,#1570b0 60%,#0b355f 85%,#1a3350 100%);"></div>
<div class="t" style="left:607.40px;top:641px;font-size:12px;letter-spacing:-0.669px;color:#000;">Files</div>
<div style="position:absolute;left:697px;top:640px;width:13px;height:13px;box-sizing:border-box;border-radius:50%;border:1px solid #8b8b8b;background:linear-gradient(135deg,#c6ccd4 0%,#e2e5e9 50%,#f6f6f6 100%);box-shadow:inset 0 0 0 1px #f8f8f8;"></div>
<div class="t" style="left:714.40px;top:641px;font-size:12px;letter-spacing:-0.004px;color:#000;">Content</div>
<div style="position:absolute;left:787px;top:662px;width:1px;height:1px;background:#7a7a7a;box-shadow:1px 1px 0 #ffffff, 0 1px 0 #b0b0b0, 1px 0 0 #c0c0c0;"></div>
<div style="position:absolute;left:784px;top:665px;width:1px;height:1px;background:#7a7a7a;box-shadow:1px 1px 0 #ffffff, 0 1px 0 #b0b0b0, 1px 0 0 #c0c0c0;"></div>
<div style="position:absolute;left:787px;top:665px;width:1px;height:1px;background:#7a7a7a;box-shadow:1px 1px 0 #ffffff, 0 1px 0 #b0b0b0, 1px 0 0 #c0c0c0;"></div>
<div style="position:absolute;left:781px;top:668px;width:1px;height:1px;background:#7a7a7a;box-shadow:1px 1px 0 #ffffff, 0 1px 0 #b0b0b0, 1px 0 0 #c0c0c0;"></div>
<div style="position:absolute;left:784px;top:668px;width:1px;height:1px;background:#7a7a7a;box-shadow:1px 1px 0 #ffffff, 0 1px 0 #b0b0b0, 1px 0 0 #c0c0c0;"></div>
<div style="position:absolute;left:787px;top:668px;width:1px;height:1px;background:#7a7a7a;box-shadow:1px 1px 0 #ffffff, 0 1px 0 #b0b0b0, 1px 0 0 #c0c0c0;"></div>
<div style="position:absolute;left:71px;top:160px;width:4px;height:1px;background:#000;"></div>
<div style="position:absolute;left:587px;top:395px;width:7px;height:1px;background:#000;"></div>
<div style="position:absolute;left:698px;top:395px;width:6px;height:1px;background:#000;"></div>
<div style="position:absolute;left:366px;top:356px;width:6px;height:1px;background:#000;"></div>
</div>
</body></html>
